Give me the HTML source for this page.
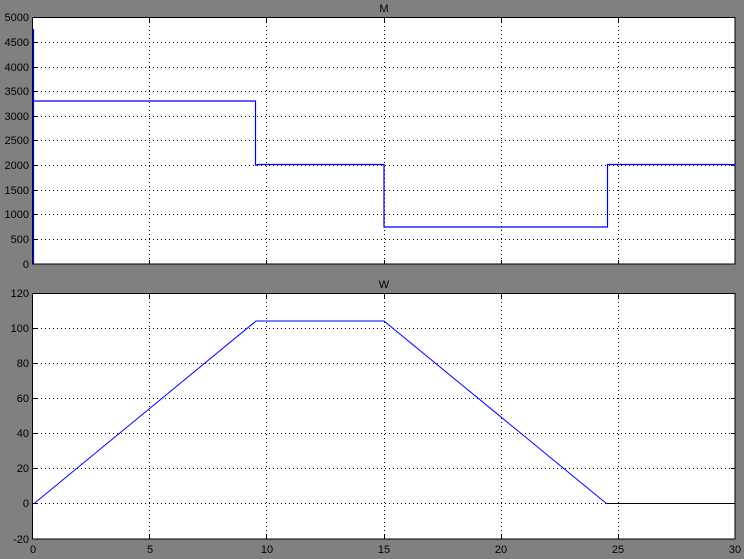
<!DOCTYPE html>
<html><head><style>html,body{margin:0;padding:0;background:#808080}svg{display:block}text{font-family:"Liberation Sans",sans-serif;font-size:11px;fill:#000}</style></head>
<body>
<svg width="744" height="559" viewBox="0 0 744 559">
<rect x="0" y="0" width="744" height="559" fill="#808080"/>
<rect x="32.5" y="17.5" width="702.5" height="246.5" fill="#fff" stroke="#000"/>
<rect x="32.5" y="293.5" width="702.5" height="245.5" fill="#fff" stroke="#000"/>
<g stroke="#000" stroke-dasharray="1,3" stroke-width="1">
<line x1="149.5" y1="18" x2="149.5" y2="264"/><line x1="266.5" y1="18" x2="266.5" y2="264"/><line x1="384.5" y1="18" x2="384.5" y2="264"/><line x1="501.5" y1="18" x2="501.5" y2="264"/><line x1="618.5" y1="18" x2="618.5" y2="264"/>
<line x1="149.5" y1="294" x2="149.5" y2="539"/><line x1="266.5" y1="294" x2="266.5" y2="539"/><line x1="384.5" y1="294" x2="384.5" y2="539"/><line x1="501.5" y1="294" x2="501.5" y2="539"/><line x1="618.5" y1="294" x2="618.5" y2="539"/>
<line x1="33" y1="42.5" x2="735" y2="42.5"/><line x1="33" y1="67.5" x2="735" y2="67.5"/><line x1="33" y1="91.5" x2="735" y2="91.5"/><line x1="33" y1="116.5" x2="735" y2="116.5"/><line x1="33" y1="140.5" x2="735" y2="140.5"/><line x1="33" y1="165.5" x2="735" y2="165.5"/><line x1="33" y1="190.5" x2="735" y2="190.5"/><line x1="33" y1="214.5" x2="735" y2="214.5"/><line x1="33" y1="239.5" x2="735" y2="239.5"/>
<line x1="33" y1="328.5" x2="735" y2="328.5"/><line x1="33" y1="363.5" x2="735" y2="363.5"/><line x1="33" y1="398.5" x2="735" y2="398.5"/><line x1="33" y1="433.5" x2="735" y2="433.5"/><line x1="33" y1="468.5" x2="735" y2="468.5"/><line x1="33" y1="503.5" x2="735" y2="503.5"/>
</g>
<g stroke="#000">
<path d="M33 42.5h4M33 67.5h4M33 91.5h4M33 116.5h4M33 140.5h4M33 165.5h4M33 190.5h4M33 214.5h4M33 239.5h4M735 42.5h-4M735 67.5h-4M735 91.5h-4M735 116.5h-4M735 140.5h-4M735 165.5h-4M735 190.5h-4M735 214.5h-4M735 239.5h-4"/>
<path d="M33 328.5h4M33 363.5h4M33 398.5h4M33 433.5h4M33 468.5h4M33 503.5h4M735 328.5h-4M735 363.5h-4M735 398.5h-4M735 433.5h-4M735 468.5h-4M735 503.5h-4"/>
<path d="M149.5 264v-4M266.5 264v-4M384.5 264v-4M501.5 264v-4M618.5 264v-4M149.5 18v4M266.5 18v4M384.5 18v4M501.5 18v4M618.5 18v4"/>
<path d="M149.5 539v-4M266.5 539v-4M384.5 539v-4M501.5 539v-4M618.5 539v-4M149.5 294v4M266.5 294v4M384.5 294v4M501.5 294v4M618.5 294v4"/>
</g>
<path d="M33.5 264V29M33.5 101H255.5V165H257.5V164.5H384V227H385.5V227H607.5V164.5H735" fill="none" stroke="#0000e0" stroke-width="1.2"/>
<path d="M33.5 504L256 321H384L607 504" fill="none" stroke="#0000ff" stroke-width="1"/>
<path d="M607 503.5H735" fill="none" stroke="#000" stroke-width="1"/>
<g text-anchor="end">
<text x="29" y="21">5000</text><text x="29" y="46">4500</text><text x="29" y="71">4000</text><text x="29" y="95">3500</text><text x="29" y="120">3000</text><text x="29" y="144">2500</text><text x="29" y="169">2000</text><text x="29" y="194">1500</text><text x="29" y="218">1000</text><text x="29" y="243">500</text><text x="29" y="268">0</text>
<text x="29" y="297">120</text><text x="29" y="332">100</text><text x="29" y="367">80</text><text x="29" y="402">60</text><text x="29" y="437">40</text><text x="29" y="472">20</text><text x="29" y="507">0</text><text x="29" y="543">-20</text>
</g>
<g text-anchor="middle">
<text x="33" y="553">0</text><text x="150" y="553">5</text><text x="267" y="553">10</text><text x="384" y="553">15</text><text x="501" y="553">20</text><text x="618" y="553">25</text><text x="735" y="553">30</text>
<text x="384" y="12">M</text><text x="384" y="288">W</text>
</g>
</svg>
</body></html>
